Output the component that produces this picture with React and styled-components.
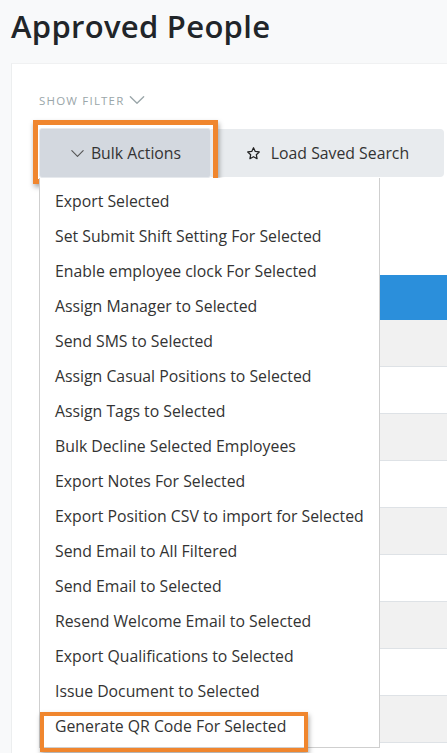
import styled, { createGlobalStyle } from 'styled-components';

const GlobalStyle = createGlobalStyle`
    body {
        margin: 0;
        background: #f8f9fa;
        font-family: "Open Sans", "DejaVu Sans", sans-serif;
        color: #333333;
        overflow: hidden;
    }
`;

const bulkActions = [
    'Export Selected',
    'Set Submit Shift Setting For Selected',
    'Enable employee clock For Selected',
    'Assign Manager to Selected',
    'Send SMS to Selected',
    'Assign Casual Positions to Selected',
    'Assign Tags to Selected',
    'Bulk Decline Selected Employees',
    'Export Notes For Selected',
    'Export Position CSV to import for Selected',
    'Send Email to All Filtered',
    'Send Email to Selected',
    'Resend Welcome Email to Selected',
    'Export Qualifications to Selected',
    'Issue Document to Selected',
    'Generate QR Code For Selected',
];

const ROW_COUNT = 9;

export default function App() {
    return (
        <>
            <GlobalStyle />
            <Page>
                <Title>Approved People</Title>
                <Card>
                    <FilterToggle>
                        SHOW FILTER
                        <ChevronDown size={20} color="#9aa6a9" />
                    </FilterToggle>
                    <Toolbar>
                        <BulkWrap>
                            <BulkButton>
                                <ChevronDown size={17} color="#555" />
                                Bulk Actions
                            </BulkButton>
                            <Menu>
                                {bulkActions.map((label, i) => (
                                    <MenuItem key={label} $marked={i === bulkActions.length - 1}>
                                        {label}
                                    </MenuItem>
                                ))}
                            </Menu>
                        </BulkWrap>
                        <SavedButton>
                            <StarIcon />
                            Load Saved Search
                        </SavedButton>
                    </Toolbar>
                    <Table>
                        <HeaderRow />
                        {Array.from({ length: ROW_COUNT }).map((_, i) => (
                            <Row key={i} $striped={i % 2 === 0} />
                        ))}
                    </Table>
                </Card>
            </Page>
        </>
    );
}

function ChevronDown({ size, color }) {
    return (
        <svg width={size} height={size} viewBox="0 0 24 24" fill="none" stroke={color} strokeWidth="1.6" strokeLinecap="round" strokeLinejoin="round">
            <path d="M4 8l8 8 8-8" />
        </svg>
    );
}

function StarIcon() {
    return (
        <svg width="15" height="15" viewBox="0 0 24 24" fill="none" stroke="#222" strokeWidth="2" strokeLinejoin="round">
            <path d="M12 2.8l2.8 5.9 6.4.8-4.7 4.4 1.2 6.4L12 17.2l-5.7 3.1 1.2-6.4-4.7-4.4 6.4-.8z" />
        </svg>
    );
}

const Page = styled.div`
    padding-top: 7px;
    height: 753px;
    box-sizing: border-box;
    display: flex;
    flex-direction: column;
    overflow: hidden;
`;

const Title = styled.h1`
    margin: 0 0 17px 11px;
    font-size: 31px;
    font-weight: 600;
    line-height: 39px;
    color: #212529;
    letter-spacing: 0.3px;
`;

const Card = styled.div`
    flex: 1;
    min-height: 0;
    margin-left: 11px;
    background: #ffffff;
    border-left: 1px solid #eceeef;
    border-top: 1px solid #f0f1f2;
    padding: 26px 0 0 27px;
    overflow: hidden;
`;

const FilterToggle = styled.div`
    display: flex;
    align-items: center;
    gap: 2px;
    font-size: 11.5px;
    letter-spacing: 1.2px;
    color: #9aa6a9;
    height: 20px;
`;

const Toolbar = styled.div`
    margin-top: 18px;
    display: flex;
    align-items: flex-start;
`;

const BulkWrap = styled.div`
    position: relative;
    z-index: 2;

    &::before {
        content: '';
        position: absolute;
        left: -6px;
        top: -8px;
        width: 185px;
        height: 64px;
        box-sizing: border-box;
        border: 5px solid #f0862e;
        box-shadow: 1px 3px 5px rgba(0, 0, 0, 0.35);
        pointer-events: none;
    }
`;

const BulkButton = styled.div`
    width: 172px;
    height: 50px;
    box-sizing: border-box;
    background: #d3d8df;
    border: 1px solid #e6e9ed;
    border-radius: 3px;
    display: flex;
    align-items: center;
    justify-content: center;
    gap: 5px;
    font-size: 15.8px;
    color: #333333;
`;

const SavedButton = styled.div`
    margin-top: 1px;
    width: 233px;
    height: 48px;
    background: #e8ebee;
    border-radius: 0 4px 4px 0;
    display: flex;
    align-items: center;
    justify-content: center;
    gap: 10px;
    font-size: 15.8px;
    color: #333333;
`;

const Menu = styled.div`
    position: absolute;
    top: 50px;
    left: 0;
    width: 341px;
    box-sizing: border-box;
    background: #ffffff;
    border: 1px solid #cfcfcf;
    border-top: none;
    padding: 6px 0 3px;
`;

const MenuItem = styled.div`
    position: relative;
    height: 35px;
    line-height: 35px;
    padding-left: 15px;
    font-size: 15.8px;
    color: #333333;
    white-space: nowrap;

    ${({ $marked }) => $marked && `
        &::after {
            content: '';
            position: absolute;
            left: 0;
            top: 3px;
            width: 268px;
            height: 40px;
            box-sizing: border-box;
            border: 4px solid #f0862e;
            box-shadow: 1px 3px 5px rgba(0, 0, 0, 0.35);
        }
    `}
`;

const Table = styled.div`
    margin-top: 97px;
    border-left: 1px solid #dee2e6;
`;

const HeaderRow = styled.div`
    height: 45px;
    background: #2b8fdb;
`;

const Row = styled.div`
    height: 46px;
    background: ${({ $striped }) => ($striped ? '#f1f1f1' : '#ffffff')};
    border-bottom: 1px solid #dee2e6;
`;
